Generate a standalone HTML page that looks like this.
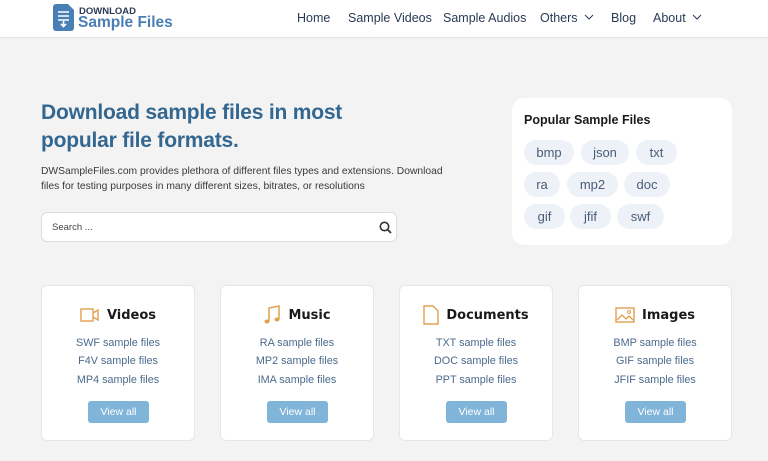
<!DOCTYPE html>
<html><head><meta charset="utf-8"><style>
*{box-sizing:border-box;margin:0;padding:0}
body{width:768px;height:461px;overflow:hidden;background:#f3f3f3;font-family:"Liberation Sans",sans-serif;position:relative}
.hdr{position:absolute;left:0;top:0;width:768px;height:38px;background:#fff;border-bottom:1px solid #e4e4e4}
.nav{position:absolute;top:11px;font-size:12.5px;color:#2a3a55}
.abs{position:absolute}
h1{position:absolute;left:41px;top:99px;font-size:21px;line-height:28px;color:#336790;font-family:"Liberation Sans",sans-serif;font-weight:bold;white-space:nowrap;letter-spacing:-0.2px}
.p{position:absolute;left:41px;top:165px;font-size:10.3px;line-height:14.5px;color:#3a3a3a;white-space:nowrap}
.search{position:absolute;left:41px;top:212px;width:356px;height:30px;background:#fff;border:1px solid #ddd;border-radius:6px}
.pop{position:absolute;left:512px;top:98px;width:220px;height:147px;background:#fff;border-radius:12px}
.pill{position:absolute;height:25px;line-height:25px;background:#eef2f8;border-radius:13px;text-align:center;font-size:13px;color:#4a5c78}
.card{position:absolute;top:285px;width:154px;height:156px;background:#fff;border:1px solid #e6e6e6;border-radius:6px}
.ct{position:absolute;top:18px;left:0;width:100%;height:22px;display:flex;align-items:center;justify-content:center;font-size:13px;font-weight:bold;color:#1a1a1a;font-family:"DejaVu Sans",sans-serif}
.ct svg{margin-right:7px}
.ln{position:absolute;left:0;width:100%;text-align:center;font-size:10.8px;color:#4b6a8c}
.btn{position:absolute;left:46px;top:115px;width:61px;height:22px;line-height:22px;background:#80b4d9;border-radius:3px;color:#fff;font-size:10.5px;text-align:center}
</style></head><body>
<div class="hdr">
<svg class="abs" style="left:53px;top:4px" width="21" height="27" viewBox="0 0 21 27"><path d="M3 0h12l6 6v18a3 3 0 0 1-3 3H3a3 3 0 0 1-3-3V3a3 3 0 0 1 3-3z" fill="#4a7fb5"/><path d="M5 8h11M5 12h11M5 16h11M10.5 17v5M8 20l2.5 2.5L13 20" stroke="#fff" stroke-width="1.6" fill="none"/></svg>
<div class="abs" style="left:79px;top:6px;font-size:9.5px;font-weight:bold;color:#2a3a55">DOWNLOAD</div>
<div class="abs" style="left:78px;top:14px;font-size:15.5px;font-weight:bold;color:#4a7fb5">Sample Files</div>
<div class="nav" style="left:297px">Home</div>
<div class="nav" style="left:348px">Sample Videos</div>
<div class="nav" style="left:443px">Sample Audios</div>
<div class="nav" style="left:540px">Others <svg width="10" height="6" style="margin-left:3px;vertical-align:2px"><path d="M1 1l4 4 4-4" stroke="#2a3a55" fill="none"/></svg></div>
<div class="nav" style="left:611px">Blog</div>
<div class="nav" style="left:653px">About <svg width="10" height="6" style="margin-left:3px;vertical-align:2px"><path d="M1 1l4 4 4-4" stroke="#2a3a55" fill="none"/></svg></div>
</div>
<h1>Download sample files in most<br>popular file formats.</h1>
<div class="p">DWSampleFiles.com provides plethora of different files types and extensions. Download<br>files for testing purposes in many different sizes, bitrates, or resolutions</div>
<div class="search"><span class="abs" style="left:10px;top:9px;font-size:9.5px;color:#444">Search ...</span>
<svg class="abs" style="left:337px;top:8px" width="13" height="13" viewBox="0 0 13 13"><circle cx="5.5" cy="5.5" r="4.2" stroke="#333" stroke-width="1.6" fill="none"/><path d="M8.5 8.5l3.5 3.5" stroke="#333" stroke-width="1.8"/></svg></div>
<div class="pop">
<div class="abs" style="left:12px;top:15px;font-size:12.5px;font-weight:bold;color:#1a1a1a">Popular Sample Files</div>
<div class="pill" style="left:12px;top:42px;width:50px">bmp</div>
<div class="pill" style="left:69px;top:42px;width:48px">json</div>
<div class="pill" style="left:124px;top:42px;width:41px">txt</div>
<div class="pill" style="left:12px;top:74px;width:36px">ra</div>
<div class="pill" style="left:55px;top:74px;width:51px">mp2</div>
<div class="pill" style="left:112px;top:74px;width:46px">doc</div>
<div class="pill" style="left:12px;top:106px;width:41px">gif</div>
<div class="pill" style="left:58px;top:106px;width:41px">jfif</div>
<div class="pill" style="left:105px;top:106px;width:47px">swf</div>
</div>

<div class="card" style="left:41px"><div class="ct"><svg width="20" height="14" viewBox="0 0 20 14"><rect x="1" y="1" width="12" height="12" fill="none" stroke="#e0a050" stroke-width="1.4"/><path d="M13 5l5-3v10l-5-3" fill="none" stroke="#e0a050" stroke-width="1.4"/></svg>Videos</div>
<div class="ln" style="top:51px">SWF sample files</div><div class="ln" style="top:69px">F4V sample files</div><div class="ln" style="top:88px">MP4 sample files</div><div class="btn">View all</div></div>
<div class="card" style="left:220px"><div class="ct"><svg width="18" height="20" viewBox="0 0 18 20"><path d="M6 16V3l10-2v13" fill="none" stroke="#e0a050" stroke-width="1.5"/><ellipse cx="4" cy="16.5" rx="2.5" ry="2" fill="#e0a050"/><ellipse cx="14" cy="14.5" rx="2.5" ry="2" fill="#e0a050"/></svg>Music</div>
<div class="ln" style="top:51px">RA sample files</div><div class="ln" style="top:69px">MP2 sample files</div><div class="ln" style="top:88px">IMA sample files</div><div class="btn">View all</div></div>
<div class="card" style="left:399px"><div class="ct"><svg width="16" height="20" viewBox="0 0 16 20"><path d="M1 1h9l5 5v13H1z" fill="none" stroke="#e0a050" stroke-width="1.4"/></svg>Documents</div>
<div class="ln" style="top:51px">TXT sample files</div><div class="ln" style="top:69px">DOC sample files</div><div class="ln" style="top:88px">PPT sample files</div><div class="btn">View all</div></div>
<div class="card" style="left:578px"><div class="ct"><svg width="20" height="16" viewBox="0 0 20 16"><rect x="1" y="1" width="18" height="14" fill="none" stroke="#e0a050" stroke-width="1.4"/><path d="M2 13l5-5 4 4 3-3 4 4" fill="none" stroke="#e0a050" stroke-width="1.3"/><circle cx="14" cy="5" r="1.5" fill="none" stroke="#e0a050"/></svg>Images</div>
<div class="ln" style="top:51px">BMP sample files</div><div class="ln" style="top:69px">GIF sample files</div><div class="ln" style="top:88px">JFIF sample files</div><div class="btn">View all</div></div>
</body></html>
